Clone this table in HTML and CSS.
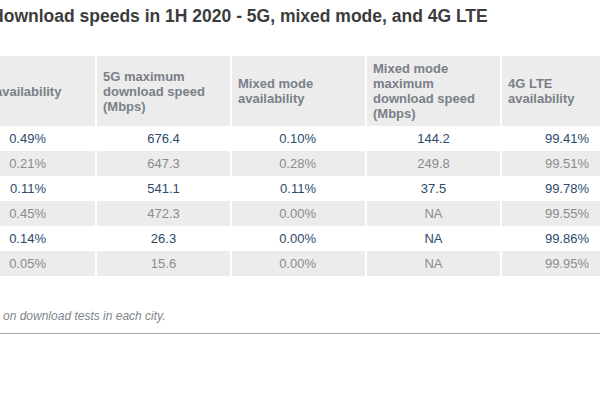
FILE: index.html
```html
<!DOCTYPE html>
<html lang="en">
<head>
<meta charset="utf-8">
<title>Download speeds in 1H 2020</title>
<link rel="stylesheet" href="styles.css">
</head>
<body>
<main class="page">
  <h1 class="title">download speeds in 1H 2020 - 5G, mixed mode, and 4G LTE</h1>
  <table class="speeds">
    <colgroup>
      <col class="w1"><col class="w2"><col class="w2"><col class="w2"><col class="w5">
    </colgroup>
    <thead>
      <tr>
        <th>5G availability</th>
        <th>5G maximum download speed (Mbps)</th>
        <th>Mixed mode availability</th>
        <th>Mixed mode maximum download speed (Mbps)</th>
        <th>4G LTE availability</th>
      </tr>
    </thead>
    <tbody>
      <tr class="odd"><td class="r">0.49%</td><td class="c">676.4</td><td class="r">0.10%</td><td class="c">144.2</td><td class="r">99.41%</td></tr>
      <tr class="even"><td class="r">0.21%</td><td class="c">647.3</td><td class="r">0.28%</td><td class="c">249.8</td><td class="r">99.51%</td></tr>
      <tr class="odd"><td class="r">0.11%</td><td class="c">541.1</td><td class="r">0.11%</td><td class="c">37.5</td><td class="r">99.78%</td></tr>
      <tr class="even"><td class="r">0.45%</td><td class="c">472.3</td><td class="r">0.00%</td><td class="c">NA</td><td class="r">99.55%</td></tr>
      <tr class="odd"><td class="r">0.14%</td><td class="c">26.3</td><td class="r">0.00%</td><td class="c">NA</td><td class="r">99.86%</td></tr>
      <tr class="even"><td class="r">0.05%</td><td class="c">15.6</td><td class="r">0.00%</td><td class="c">NA</td><td class="r">99.95%</td></tr>
    </tbody>
  </table>
  <p class="note">on download tests in each city.</p>
</main>
</body>
</html>
```
FILE: styles.css
```css
html, body {
  margin: 0;
  padding: 0;
  overflow: hidden;
  background: #fff;
}
body {
  font-family: "Liberation Sans", Arial, sans-serif;
}
.page {
  width: 600px;
  overflow: hidden;
}
.title {
  margin: 6px 0 0 -7px;
  font-size: 17.5px;
  line-height: 20px;
  font-weight: bold;
  color: #3c3c3c;
  white-space: nowrap;
}
.speeds {
  margin: 30px 0 0 -32px;
  width: 670px;
  table-layout: fixed;
  border-collapse: separate;
  border-spacing: 0;
  font-size: 13px;
}
.w1 { width: 127px; }
.w2 { width: 135px; }
.w5 { width: 138px; }
.speeds th,
.speeds td {
  box-sizing: border-box;
  border-left: 2px solid #fff;
}
.speeds th:first-child,
.speeds td:first-child {
  border-left: 0;
}
.speeds th {
  height: 70px;
  padding: 0 20px 0 6px;
  background: #ececec;
  color: #7a8089;
  font-weight: bold;
  line-height: 15px;
  text-align: left;
  vertical-align: middle;
}
.speeds td {
  height: 25px;
  padding: 0;
  line-height: 15px;
  vertical-align: middle;
}
.speeds td.r {
  text-align: right;
  padding-right: 49px;
}
.speeds td.c {
  text-align: center;
}
.odd td {
  background: #fff;
  color: #2c4a6c;
}
.even td {
  background: #ececec;
  color: #8b8b8b;
}
.note {
  margin: 32px 0 0 0;
  padding: 0 0 9px 3px;
  font-size: 12px;
  line-height: 16px;
  font-style: italic;
  color: #80868d;
  border-bottom: 1px solid #a4aaaa;
}
```
